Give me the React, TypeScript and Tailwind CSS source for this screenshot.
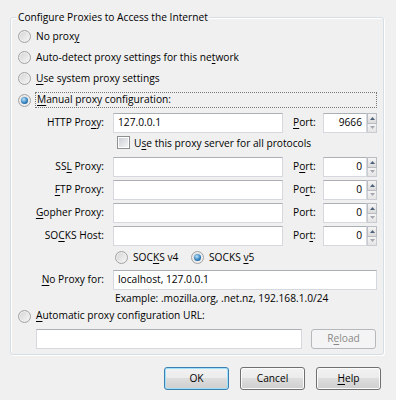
import React from "react";

const F = { fontFamily: '"Open Sans", "Noto Sans", sans-serif' };

function Radio({ checked }: { checked?: boolean }) {
  return (
    <span className="relative inline-flex w-[13px] h-[13px] shrink-0 items-center justify-center rounded-full border border-[#a2a2a2] bg-[linear-gradient(135deg,#d3d3d3,#f7f7f7)] shadow-[inset_0_0_0_1px_#efefef]">
      {checked && (
        <span className="w-[7px] h-[7px] rounded-full bg-[radial-gradient(circle_at_40%_35%,#b9e4fb,#2c79b9_60%,#1a4f86)]" />
      )}
    </span>
  );
}

function Check() {
  return (
    <span className="inline-flex w-[13px] h-[13px] shrink-0 items-center justify-center border border-[#8e8f8f] bg-white">
      <span className="w-[9px] h-[9px] bg-[linear-gradient(135deg,#cbcfd5,#f4f4f4)]" />
    </span>
  );
}

function Input({ w, value, right }: { w: string; value?: string; right?: boolean }) {
  return (
    <div
      className={`${w} h-[20px] flex items-center bg-white border border-[#d5d8de] border-t-[#abafb6] px-[4px] ${right ? "justify-end" : ""}`}
    >
      {value}
    </div>
  );
}

function Spin() {
  return (
    <div className="w-[10px] h-[20px] flex flex-col">
      <div className="flex-1 flex items-center justify-center border border-[#b9bdc2] bg-[linear-gradient(#f5f5f5,#dadada)]">
        <svg width="5" height="3" viewBox="0 0 5 3">
          <path d="M2.5 0 L5 3 L0 3 Z" fill="#4c607a" />
        </svg>
      </div>
      <div className="flex-1 flex items-center justify-center border border-t-0 border-[#c9ccd0] bg-[linear-gradient(#f5f5f5,#e4e4e4)]">
        <svg width="5" height="3" viewBox="0 0 5 3">
          <path d="M0 0 L5 0 L2.5 3 Z" fill="#a3a8ae" />
        </svg>
      </div>
    </div>
  );
}

function U({ children }: { children: React.ReactNode }) {
  return <span className="underline underline-offset-[2px]">{children}</span>;
}

function ProxyRow({
  label,
  port,
  value,
  portVal,
  className = "",
}: {
  label: React.ReactNode;
  port: React.ReactNode;
  value?: string;
  portVal: string;
  className?: string;
}) {
  return (
    <div className={`flex items-center h-[20px] ${className}`}>
      <div className="w-[86px] text-right">{label}</div>
      <div className="ml-[9px]">
        <Input w="w-[170px]" value={value} />
      </div>
      <div className="ml-[10px] w-[30px]">{port}</div>
      <Input w="w-[44px]" value={portVal} right />
      <Spin />
    </div>
  );
}

function Btn({
  children,
  w = "w-[65px]",
  def,
  disabled,
  h = "h-[23px]",
}: {
  children: React.ReactNode;
  w?: string;
  def?: boolean;
  disabled?: boolean;
  h?: string;
}) {
  if (disabled)
    return (
      <div className={`${w} ${h} flex items-center justify-center rounded-[3px] border border-[#b5b9bc] bg-[#f4f4f4] text-[#8a8a8a]`}>
        {children}
      </div>
    );
  return (
    <div
      className={`${w} ${h} flex items-center justify-center rounded-[3px] border ${
        def ? "border-[#3c7fb1] shadow-[inset_0_0_0_1px_#9fe1fd]" : "border-[#707070] shadow-[inset_0_0_0_1px_#fbfbfb]"
      } bg-[linear-gradient(#f2f2f2,#ebebeb_50%,#dddddd_50%,#cfcfcf)]`}
    >
      {children}
    </div>
  );
}

export default function App() {
  return (
    <div className="w-[396px] h-[400px] bg-[#f0f0f0] text-[10.2px] font-medium text-black pt-[17px] pl-[10px]" style={F}>
      <div className="relative w-[374px] h-[338px] rounded-[3px] border border-[#d5dfe5] shadow-[inset_1px_1px_0_#ffffff,1px_1px_0_#ffffff]">
        <div className="absolute left-[6px] top-[-9px] bg-[#f0f0f0] px-[1px] leading-[16px]">
          Configure Proxies to Access the Internet
        </div>
        <div className="pt-[8px] pl-[7px] pr-[6px] flex flex-col">
          <div className="flex items-center h-[21px] gap-[5px]">
            <Radio />
            <span>
              No prox<U>y</U>
            </span>
          </div>
          <div className="flex items-center h-[21px] gap-[5px]">
            <Radio />
            <span>
              Auto-detect proxy settings for this ne<U>t</U>work
            </span>
          </div>
          <div className="flex items-center h-[21px] gap-[5px]">
            <Radio />
            <span>
              <U>U</U>se system proxy settings
            </span>
          </div>
          <div className="flex items-center h-[20px] mt-[1px] gap-[4px]">
            <Radio checked />
            <div className="flex-1 h-[16px] flex items-center border border-dotted border-[#7a7a7a] pl-[1px]">
              <span>
                <U>M</U>anual proxy configuration:
              </span>
            </div>
          </div>

          <ProxyRow
            className="mt-[3px]"
            label={
              <>
                HTTP Pro<U>x</U>y:
              </>
            }
            value="127.0.0.1"
            port={
              <>
                <U>P</U>ort:
              </>
            }
            portVal="9666"
          />
          <div className="flex items-center h-[22px]">
            <span className="ml-[99px]">
              <Check />
            </span>
            <span className="ml-[4px]">
              U<U>s</U>e this proxy server for all protocols
            </span>
          </div>
          <ProxyRow
            className="mt-[2px]"
            label={
              <>
                SS<U>L</U> Proxy:
              </>
            }
            port={
              <>
                P<U>o</U>rt:
              </>
            }
            portVal="0"
          />
          <ProxyRow
            className="mt-[3px]"
            label={
              <>
                <U>F</U>TP Proxy:
              </>
            }
            port={
              <>
                Po<U>r</U>t:
              </>
            }
            portVal="0"
          />
          <ProxyRow
            className="mt-[3px]"
            label={
              <>
                <U>G</U>opher Proxy:
              </>
            }
            port={<>Port:</>}
            portVal="0"
          />
          <ProxyRow
            className="mt-[3px]"
            label={
              <>
                SO<U>C</U>KS Host:
              </>
            }
            port={
              <>
                Por<U>t</U>:
              </>
            }
            portVal="0"
          />
          <div className="flex items-center h-[22px] mt-[1px]">
            <div className="ml-[97px] w-[76px] flex items-center gap-[5px]">
              <Radio />
              <span>
                SOC<U>K</U>S v4
              </span>
            </div>
            <div className="flex items-center gap-[5px]">
              <Radio checked />
              <span>
                SOCKS <U>v</U>5
              </span>
            </div>
          </div>
          <div className="flex items-center h-[20px] mt-[1px]">
            <div className="w-[86px] text-right">
              <U>N</U>o Proxy for:
            </div>
            <div className="ml-[9px]">
              <Input w="w-[264px]" value="localhost, 127.0.0.1" />
            </div>
          </div>
          <div className="flex items-center h-[17px] pl-[97px]">Example: .mozilla.org, .net.nz, 192.168.1.0/24</div>
          <div className="flex items-center h-[18px] gap-[5px]">
            <Radio />
            <span>
              <U>A</U>utomatic proxy configuration URL:
            </span>
          </div>
          <div className="flex items-center h-[20px] mt-[4px] pl-[18px]">
            <Input w="w-[266px]" />
            <div className="ml-[9px]">
              <Btn disabled h="h-[20px]">
                R<U>e</U>load
              </Btn>
            </div>
          </div>
        </div>
      </div>
      <div className="flex justify-end gap-[11px] pr-[15px] mt-[12px]">
        <Btn def>OK</Btn>
        <Btn>Cancel</Btn>
        <Btn>
          <U>H</U>elp
        </Btn>
      </div>
    </div>
  );
}
